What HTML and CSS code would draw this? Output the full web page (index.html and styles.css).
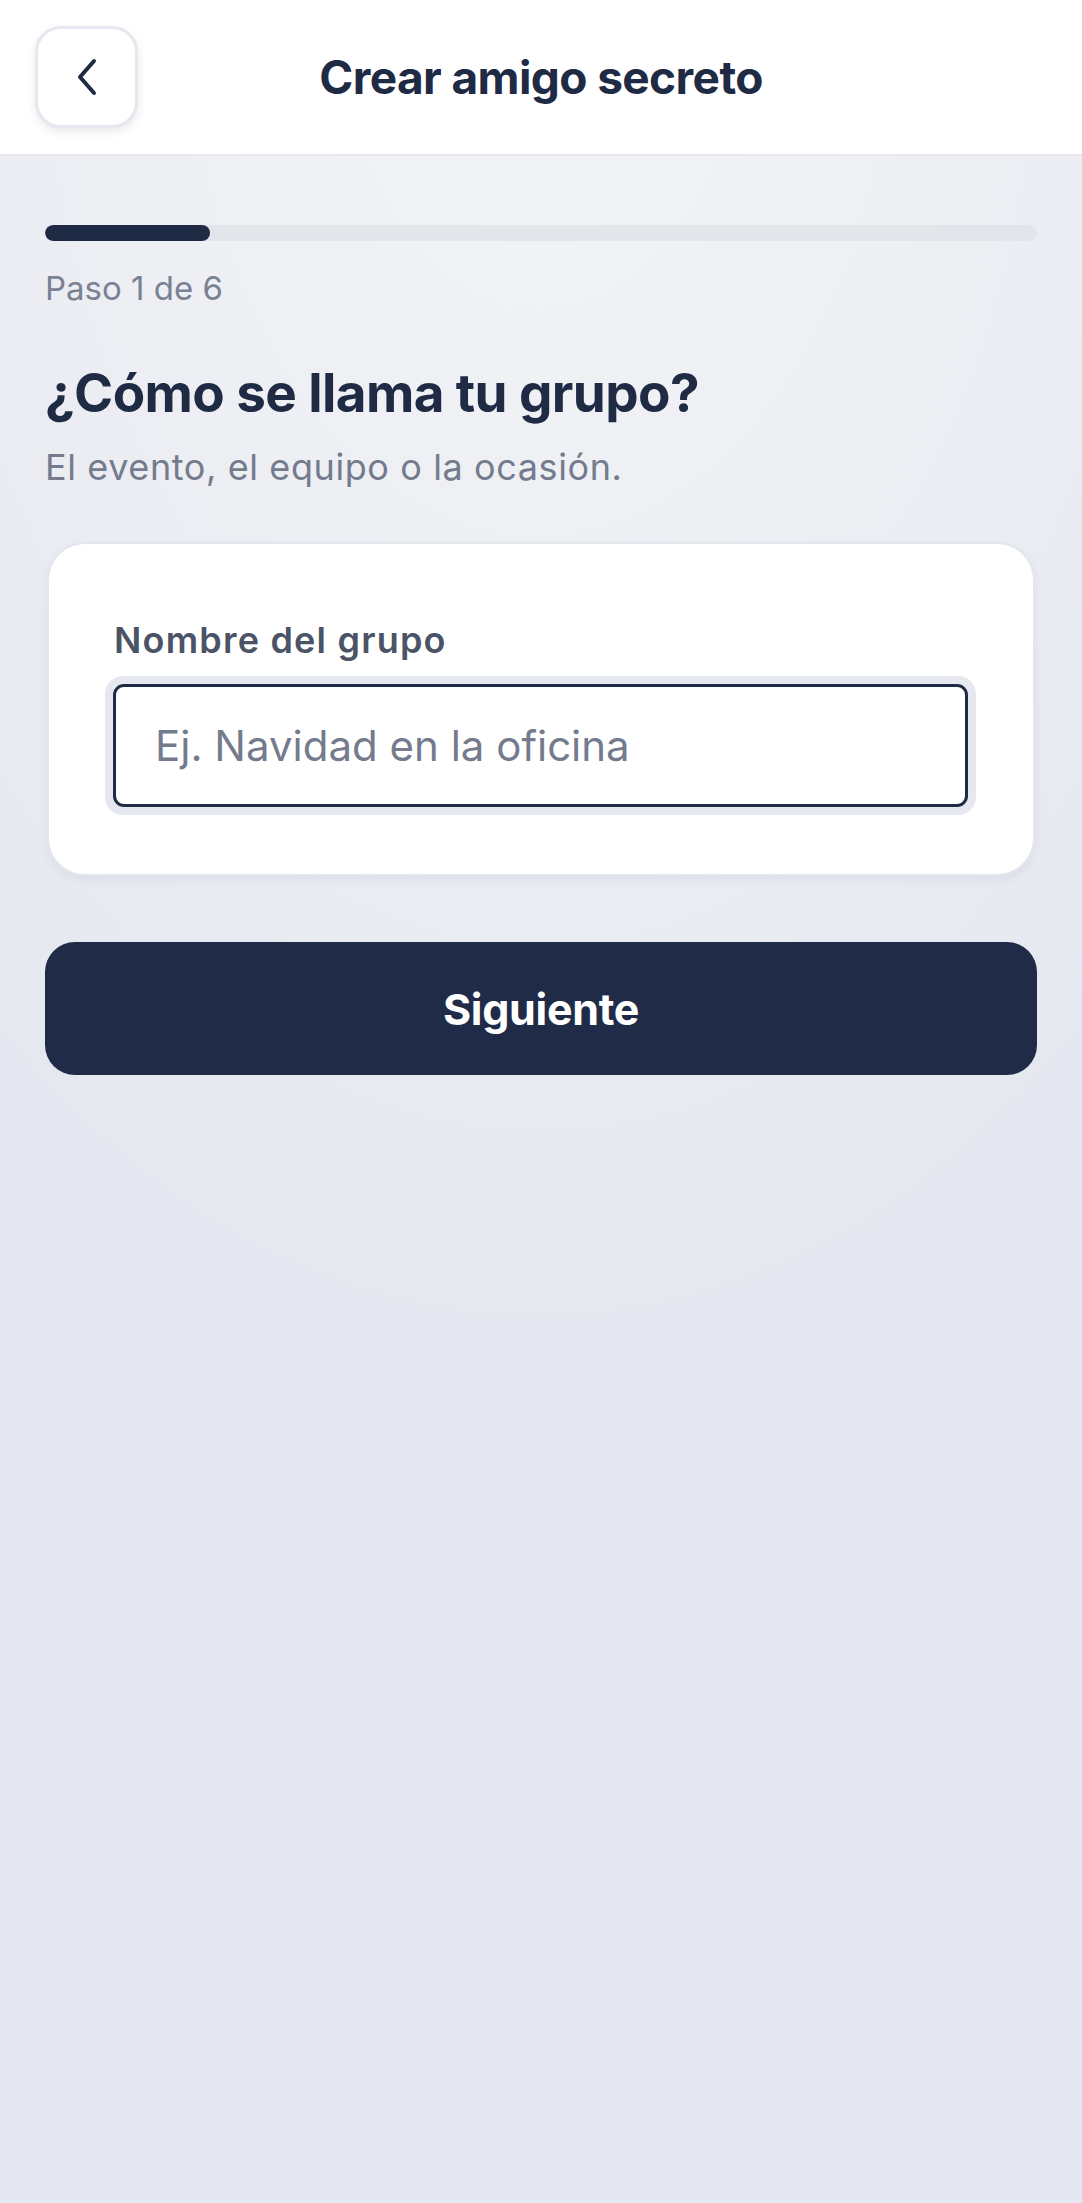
FILE: index.html
```html
<!DOCTYPE html>
<html lang="es">
<head>
    <meta charset="UTF-8">
    <meta name="viewport" content="width=device-width, initial-scale=1.0">
    <title>Crear amigo secreto</title>
    <link rel="stylesheet" href="styles.css">
</head>
<body>

<header class="topbar">
    <button type="button" class="back-btn" aria-label="Volver">
        <svg width="24" height="38" viewBox="0 0 24 38" fill="none">
            <path d="M19 3 L5 19 L19 35" stroke="#1f2a44" stroke-width="4" stroke-linecap="round" stroke-linejoin="round"/>
        </svg>
    </button>
    <h1 class="topbar-title">Crear amigo secreto</h1>
    <div></div>
</header>

<main class="content">
    <!-- Progress -->
    <div class="progress-track">
        <div class="progress-fill" style="width: 16.67%;"></div>
    </div>
    <p class="step">Paso 1 de 6</p>

    <h2 class="question">¿Cómo se llama tu grupo?</h2>
    <p class="hint">El evento, el equipo o la ocasión.</p>

    <form class="card" onsubmit="return false;">
        <label for="groupName" class="field-label">Nombre del grupo</label>
        <div class="input-ring">
            <input type="text" id="groupName" name="groupName" placeholder="Ej. Navidad en la oficina">
        </div>
    </form>

    <button type="button" class="next-btn">Siguiente</button>
</main>

</body>
</html>
```

FILE: styles.css
```css
* {
    box-sizing: border-box;
}

html, body {
    margin: 0;
    padding: 0;
}

body {
    font-family: Inter, "Noto Sans", sans-serif;
    color: #1f2a44;
    min-height: 2203px;
    background-color: #e5e8f0;
    background-image: radial-gradient(ellipse 80% 60% at 50% 0%, #f3f4f7 0%, #eceef3 55%, #e5e8f0 100%);
    background-repeat: no-repeat;
}

/* Header */
.topbar {
    height: 156px;
    background: #fff;
    border-bottom: 2px solid #e6e8ee;
    display: grid;
    grid-template-columns: 1fr auto 1fr;
    align-items: center;
    padding: 0 35px;
}

.back-btn {
    width: 103px;
    height: 102px;
    border-radius: 26px;
    border: 3px solid #e6e8ef;
    background: #fff;
    box-shadow: 0 4px 8px rgba(31, 42, 68, 0.10);
    display: flex;
    align-items: center;
    justify-content: center;
    padding: 0;
    cursor: pointer;
    align-self: start;
    margin-top: 26px;
}

.topbar-title {
    margin: 0;
    font-size: 46px;
    font-weight: 700;
    letter-spacing: -0.6px;
    color: #1f2a44;
}

/* Main */
.content {
    padding: 69px 45px 0;
}

.progress-track {
    height: 16px;
    border-radius: 8px;
    background: #e3e5eb;
    overflow: hidden;
}

.progress-fill {
    height: 100%;
    border-radius: 8px;
    background: #1f2a44;
}

.step {
    margin: 27px 0 0;
    font-size: 33px;
    line-height: 40px;
    color: #7a8193;
}

.question {
    margin: 54px 0 0;
    font-size: 53px;
    line-height: 62px;
    font-weight: 700;
    letter-spacing: -0.6px;
    color: #1f2a44;
}

.hint {
    margin: 21px 0 0;
    font-size: 36px;
    line-height: 44px;
    letter-spacing: 0.6px;
    color: #737b8d;
}

.card {
    margin: 53px 2px 0;
    background: #fff;
    border: 2px solid #e3e6ed;
    border-radius: 38px;
    box-shadow: 0 4px 10px rgba(31, 42, 68, 0.06);
    padding: 74px 57px 59px 56px;
}

.field-label {
    display: block;
    font-size: 36px;
    line-height: 44px;
    font-weight: 600;
    letter-spacing: 1.2px;
    color: #4b5366;
    margin: 0 0 14px 9px;
}

.input-ring {
    padding: 8px;
    border-radius: 18px;
    background: #e6e8ef;
}

.input-ring input {
    display: block;
    width: 100%;
    height: 123px;
    border: 3px solid #1f2a44;
    border-radius: 11px;
    background: #fff;
    padding: 0 39px;
    font-family: Inter, "Noto Sans", sans-serif;
    font-size: 42px;
    color: #1f2a44;
    outline: none;
}

.input-ring input::placeholder {
    color: #737b8d;
}

.next-btn {
    display: block;
    width: 100%;
    height: 133px;
    margin-top: 66px;
    border: none;
    border-radius: 30px;
    background: #202b47;
    color: #fff;
    font-family: Inter, "Noto Sans", sans-serif;
    font-size: 43px;
    font-weight: 700;
    letter-spacing: -0.3px;
    cursor: pointer;
}
```
